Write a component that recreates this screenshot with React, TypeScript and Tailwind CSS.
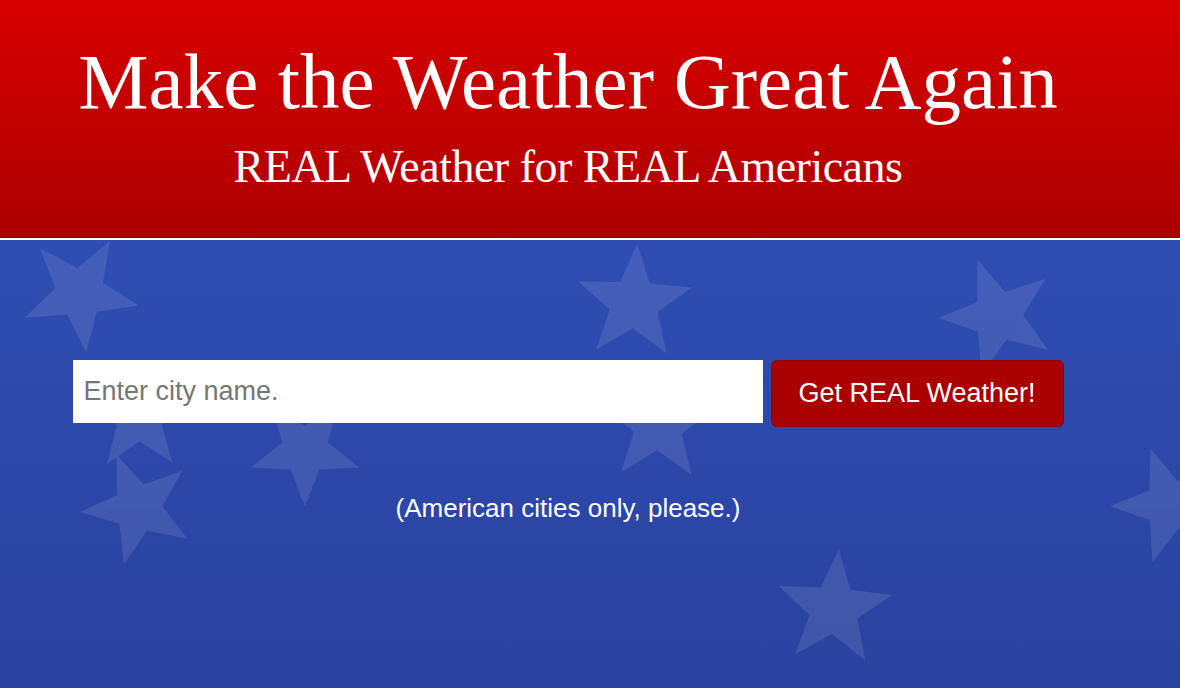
import React from 'react';

type Star = { cx: number; cy: number; r: number; rot: number };

// star positions are relative to the top of the blue area
const STARS: Star[] = [
  { cx: 80, cy: 53, r: 60, rot: -60 },
  { cx: 634, cy: 63, r: 60, rot: -87 },
  { cx: 998, cy: 76, r: 60, rot: -110 },
  { cx: 138, cy: 268, r: 58, rot: -40 },
  { cx: 139, cy: 178, r: 56, rot: 53 },
  { cx: 305, cy: 210, r: 57, rot: 90 },
  { cx: 658, cy: 185, r: 60, rot: 56 },
  { cx: 834, cy: 369, r: 60, rot: -85.5 },
  { cx: 1170, cy: 265, r: 60, rot: -109 },
];

const starPoints = ({ cx, cy, r, rot }: Star) => {
  const pts: string[] = [];
  for (let i = 0; i < 10; i++) {
    const a = ((rot + i * 36) * Math.PI) / 180;
    const rad = i % 2 === 0 ? r : r * 0.42;
    pts.push(`${(cx + rad * Math.cos(a)).toFixed(1)},${(cy + rad * Math.sin(a)).toFixed(1)}`);
  }
  return pts.join(' ');
};

const StarField = () => (
  <svg
    className="absolute left-0 top-0 pointer-events-none"
    width={1180}
    height={448}
    viewBox="0 0 1180 448"
  >
    <g fill="#ffffff" opacity={0.1}>
      {STARS.map((s, i) => (
        <polygon key={i} points={starPoints(s)} strokeLinejoin="round" />
      ))}
    </g>
  </svg>
);

export default function App() {
  return (
    <div className="flex h-screen min-h-[688px] w-full flex-col overflow-hidden">
      {/* Header */}
      <header className="h-[240px] shrink-0 bg-gradient-to-b from-[#d80000] to-[#ac0000] border-b-2 border-white">
        <div className="flex w-[1136px] flex-col items-center pt-[42px] text-white" style={{ fontFamily: '"Liberation Serif", "Times New Roman", serif' }}>
          <h1 className="text-[79px] leading-none font-normal whitespace-nowrap">
            Make the Weather Great Again
          </h1>
          <h2 className="mt-[23px] text-[46px] leading-none font-normal tracking-[-0.5px] whitespace-nowrap">
            REAL Weather for REAL Americans
          </h2>
        </div>
      </header>

      {/* Blue search area */}
      <main className="relative flex-1 overflow-hidden bg-gradient-to-b from-[#2f4db3] to-[#2a429f]">
        <StarField />
        <div
          className="relative z-10 flex w-[1136px] flex-col items-center pt-[120px]"
          style={{ fontFamily: '"Liberation Sans", Arial, sans-serif' }}
        >
          <form className="flex items-start gap-2" onSubmit={(e) => e.preventDefault()}>
            <input
              type="text"
              placeholder="Enter city name."
              className="h-[63px] w-[690px] bg-white pl-[11px] text-[27px] text-gray-800 outline-none placeholder:text-[#767676]"
            />
            <button
              type="submit"
              className="h-[67px] w-[293px] rounded-[6px] border border-[#8e0000] bg-[#aa0000] text-[27px] text-white"
            >
              Get REAL Weather!
            </button>
          </form>
          <p className="mt-[68px] text-[26px] leading-none font-light text-white">
            (American cities only, please.)
          </p>
        </div>
      </main>
    </div>
  );
}
